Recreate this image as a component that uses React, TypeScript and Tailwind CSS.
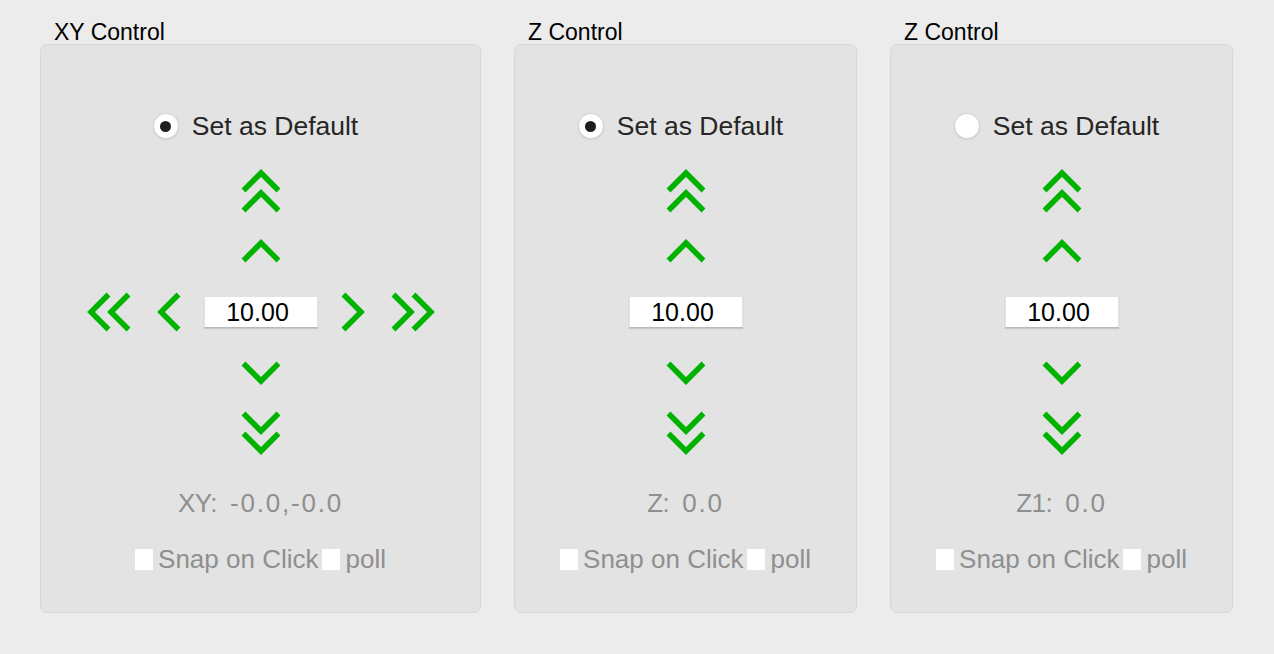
import React from "react";

type Dir = "up" | "down" | "left" | "right";

const PTS: Record<Dir, { w: number; h: number; a: string; b: string; bw: number; bh: number }> = {
  up: { w: 40, h: 24, a: "2.5,21.5 20,4 37.5,21.5", b: "2.5,41.5 20,24 37.5,41.5", bw: 40, bh: 44 },
  down: { w: 40, h: 24, a: "2.5,2.5 20,20 37.5,2.5", b: "2.5,22.5 20,40 37.5,22.5", bw: 40, bh: 44 },
  left: { w: 24, h: 40, a: "21.5,2.5 4,20 21.5,37.5", b: "41.5,2.5 24,20 41.5,37.5", bw: 44, bh: 40 },
  right: { w: 24, h: 40, a: "2.5,2.5 20,20 2.5,37.5", b: "22.5,2.5 40,20 22.5,37.5", bw: 44, bh: 40 },
};

function Chev({ dir, dbl = false }: { dir: Dir; dbl?: boolean }) {
  const p = PTS[dir];
  const w = dbl ? p.bw : p.w;
  const h = dbl ? p.bh : p.h;
  return (
    <svg width={w} height={h} viewBox={`0 0 ${w} ${h}`} className="block shrink-0">
      <g fill="none" stroke="#00b300" strokeWidth={5.5} strokeLinecap="butt" strokeLinejoin="miter">
        <polyline points={p.a} />
        {dbl && <polyline points={p.b} />}
      </g>
    </svg>
  );
}

function Radio({ on }: { on: boolean }) {
  return (
    <div className="w-[26px] h-[26px] rounded-full bg-white border border-[#d6d6d6] shadow-[0_0.5px_1.5px_rgba(0,0,0,0.12)] flex items-center justify-center shrink-0">
      {on && <div className="w-[11px] h-[11px] rounded-full bg-[#1e1e1e]" />}
    </div>
  );
}

function Box() {
  return <div className="w-[18px] h-[21px] bg-white shrink-0" />;
}

function Panel({
  title,
  width,
  xy,
  on,
  label,
  value,
}: {
  title: string;
  width: string;
  xy: boolean;
  on: boolean;
  label: string;
  value: string;
}) {
  return (
    <div className="flex flex-col">
      <div className="h-[24px] leading-[24px] pl-[14px] text-[23px] text-black whitespace-nowrap">{title}</div>
      <div
        className={`${width} h-[569px] rounded-[7px] bg-[#e3e3e3] border border-[#d8d8d8] flex flex-col items-center`}
      >
        <div className="mt-[67px] h-[28px] flex items-center gap-[13px] mr-[10px]">
          <Radio on={on} />
          <span className="text-[26.5px] leading-[28px] text-[#262626] whitespace-nowrap">
            Set as Default
          </span>
        </div>
        <div className="mt-[29px]">
          <Chev dir="up" dbl />
        </div>
        <div className="mt-[26px]">
          <Chev dir="up" />
        </div>
        <div className="mt-[29px] h-[40px] flex items-center">
          {xy && (
            <>
              <Chev dir="left" dbl />
              <div className="ml-[26px]">
                <Chev dir="left" />
              </div>
            </>
          )}
          <div
            className={`${xy ? "mx-[23px]" : ""} w-[114px] h-[32px] bg-white border border-[#e2e2e2] border-b-[#b9b9b9] shadow-[0_1px_1px_rgba(0,0,0,0.12)] flex items-center justify-center pr-[6px] text-[25px] leading-[30px] text-black`}
          >
            10.00
          </div>
          {xy && (
            <>
              <Chev dir="right" />
              <div className="ml-[26px]">
                <Chev dir="right" dbl />
              </div>
            </>
          )}
        </div>
        <div className="mt-[29px]">
          <Chev dir="down" />
        </div>
        <div className="mt-[26px]">
          <Chev dir="down" dbl />
        </div>
        <div className="mt-[33px] h-[30px] flex items-center text-[26px] leading-[30px] text-[#8f8f8f] whitespace-nowrap">
          <span className="tracking-[-0.5px]">{label}</span>
          <span className="ml-[13px] tracking-[1.8px]">{value}</span>
        </div>
        <div className="mt-[26px] h-[30px] flex items-center text-[26px] leading-[30px] text-[#8f8f8f] whitespace-nowrap">
          <Box />
          <span className="ml-[5px]">Snap on Click</span>
          <div className="ml-[4px]">
            <Box />
          </div>
          <span className="ml-[5px]">poll</span>
        </div>
      </div>
    </div>
  );
}

export default function App() {
  return (
    <div
      className="w-[1274px] h-[654px] bg-[#ececec] flex items-start gap-[33px] pl-[40px] pt-[20px]"
      style={{ fontFamily: '"Liberation Sans", Arial, sans-serif' }}
    >
      <Panel title="XY Control" width="w-[441px]" xy on label="XY:" value="-0.0,-0.0" />
      <Panel title="Z Control" width="w-[343px]" xy={false} on label="Z:" value="0.0" />
      <Panel title="Z Control" width="w-[343px]" xy={false} on={false} label="Z1:" value="0.0" />
    </div>
  );
}
